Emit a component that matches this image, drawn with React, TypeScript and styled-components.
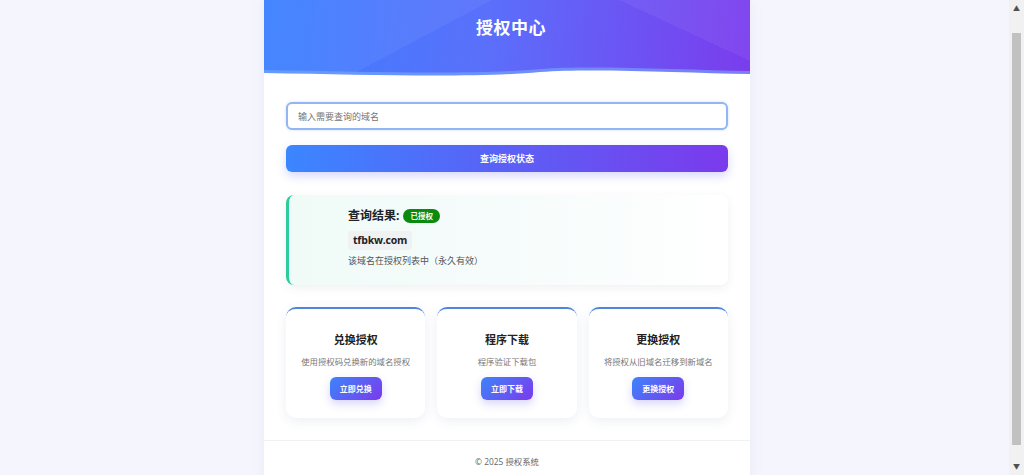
import styled, { createGlobalStyle } from "styled-components"

const GlobalStyle = createGlobalStyle`
	html, body {
		margin: 0;
		padding: 0;
		background: #f5f6fd;
	}
	body {
		font-family: "Open Sans", "Noto Sans CJK SC", sans-serif;
		color: #222;
	}
	* {
		box-sizing: border-box;
	}
`

const Wave = () => (
	<WaveSvg viewBox="0 0 486 14" preserveAspectRatio="none">
		<path
			d="M0,6 C110,8 210,11 276,5 C330,1 420,6 486,7 L486,14 L0,14 Z"
			fill="rgba(120,170,255,0.6)"
		/>
		<path
			d="M0,9 C110,11 210,14 276,8 C330,4 420,9 486,10 L486,14 L0,14 Z"
			fill="#ffffff"
		/>
	</WaveSvg>
)

// fake browser scrollbar, as seen in the screenshot
const Scrollbar = () => (
	<ScrollTrack>
		<ScrollArrow>▲</ScrollArrow>
		<ScrollThumb />
		<ScrollArrow>▼</ScrollArrow>
	</ScrollTrack>
)

const App = () => {
	const actions = [
		{ title: "兑换授权", desc: "使用授权码兑换新的域名授权", cta: "立即兑换" },
		{ title: "程序下载", desc: "程序验证下载包", cta: "立即下载" },
		{ title: "更换授权", desc: "将授权从旧域名迁移到新域名", cta: "更换授权" },
	]

	return (
		<>
			<GlobalStyle />
			<Page>
				<Container>
					<Header>
						<Title>授权中心</Title>
						<Wave />
					</Header>

					<Main>
						<SearchInput placeholder="输入需要查询的域名" />
						<SearchButton>查询授权状态</SearchButton>

						<ResultCard>
							<ResultHead>
								查询结果:
								<Badge>已授权</Badge>
							</ResultHead>
							<Domain>tfbkw.com</Domain>
							<ResultNote>该域名在授权列表中（永久有效）</ResultNote>
						</ResultCard>

						<CardGrid>
							{actions.map((action, index) => (
								<ActionCard key={index}>
									<CardTitle>{action.title}</CardTitle>
									<CardDesc>{action.desc}</CardDesc>
									<CardButton>{action.cta}</CardButton>
								</ActionCard>
							))}
						</CardGrid>
					</Main>

					<Footer>© 2025 授权系统</Footer>
				</Container>
			</Page>
			<Scrollbar />
		</>
	)
}

export default App

const Page = styled.div`
	min-height: 100vh;
	padding-right: 10px;
`

const Container = styled.div`
	width: 486px;
	margin: 0 auto;
	background: #ffffff;
	box-shadow: 0 0 14px rgba(80, 90, 160, 0.08);
	padding-bottom: 18px;
`

const Header = styled.header`
	position: relative;
	height: 78px;
	padding-top: 14px;
	padding-left: 8px;
	text-align: center;
	background:
		linear-gradient(152deg, rgba(255, 255, 255, 0.05) 36%, transparent 36%),
		linear-gradient(205deg, rgba(255, 255, 255, 0.05) 20%, transparent 20%),
		linear-gradient(95deg, #3a80ff 0%, #5a70fb 45%, #7b3ced 100%);
	overflow: hidden;
`

const Title = styled.h1`
	margin: 0;
	font-size: 17px;
	font-weight: 700;
	color: #ffffff;
	letter-spacing: 0.5px;
`

const WaveSvg = styled.svg`
	position: absolute;
	left: 0;
	bottom: 0;
	width: 100%;
	height: 14px;
	display: block;
`

const Main = styled.main`
	padding: 24px 22px 22px;
	display: flex;
	flex-direction: column;
`

const SearchInput = styled.input`
	height: 28px;
	width: 100%;
	padding: 0 10px;
	border: 2px solid #93b6f2;
	border-radius: 6px;
	font-family: inherit;
	font-size: 9px;
	outline: none;
	box-shadow: 0 0 3px rgba(59, 130, 246, 0.25);

	&::placeholder {
		color: #757575;
	}
`

const SearchButton = styled.button`
	margin-top: 15px;
	height: 27px;
	width: 100%;
	border: none;
	border-radius: 6px;
	background: linear-gradient(90deg, #3b86ff, #7b3aec);
	color: #ffffff;
	font-family: inherit;
	font-size: 9px;
	font-weight: 700;
	box-shadow: 0 4px 10px rgba(90, 100, 240, 0.25);
`

const ResultCard = styled.section`
	margin-top: 23px;
	height: 90px;
	padding: 12px 0 0 59px;
	border-left: 3px solid #2ccc9c;
	border-radius: 8px;
	background: linear-gradient(90deg, #f0fbf8 0%, #f6fcfb 50%, #ffffff 100%);
	box-shadow: 0 3px 10px rgba(60, 80, 120, 0.08);
	display: flex;
	flex-direction: column;
	align-items: flex-start;
`

const ResultHead = styled.h3`
	margin: 0;
	font-size: 12px;
	font-weight: 700;
	color: #222;
	display: flex;
	align-items: center;
	gap: 4px;
	line-height: 18px;
`

const Badge = styled.span`
	background: #0b8a10;
	color: #ffffff;
	font-size: 7.5px;
	font-weight: 700;
	padding: 2px 7px;
	border-radius: 8px;
	line-height: 10px;
`

const Domain = styled.div`
	margin-top: 6px;
	padding: 3px 5px;
	background: #eff1f3;
	border-radius: 4px;
	font-size: 10.5px;
	font-weight: 700;
	letter-spacing: -0.2px;
	color: #222;
	line-height: 13px;
`

const ResultNote = styled.p`
	margin: 5px 0 0;
	font-size: 9px;
	color: #555;
	line-height: 12px;
`

const CardGrid = styled.div`
	margin-top: 22px;
	display: grid;
	grid-template-columns: repeat(3, 1fr);
	gap: 12px;
`

const ActionCard = styled.article`
	height: 111px;
	padding-top: 24px;
	border-top: 2px solid #4f86dc;
	border-radius: 10px;
	background: #ffffff;
	box-shadow: 0 3px 12px rgba(60, 80, 130, 0.09);
	display: flex;
	flex-direction: column;
	align-items: center;
`

const CardTitle = styled.h4`
	margin: 0;
	font-size: 11px;
	font-weight: 700;
	color: #222;
	line-height: 14px;
`

const CardDesc = styled.p`
	margin: 9px 0 0;
	font-size: 8.4px;
	color: #777;
	line-height: 11px;
`

const CardButton = styled.button`
	margin-top: 10px;
	height: 23px;
	padding: 0 10px;
	border: none;
	border-radius: 6px;
	background: linear-gradient(135deg, #3d84fb, #7b3aec);
	color: #ffffff;
	font-family: inherit;
	font-size: 8px;
	font-weight: 700;
	box-shadow: 0 4px 8px rgba(100, 90, 240, 0.25);
`

const Footer = styled.footer`
	border-top: 1px solid #f0f1f5;
	padding: 14px 0 30px;
	text-align: center;
	font-size: 8.4px;
	color: #666;
`

const ScrollTrack = styled.div`
	position: fixed;
	top: 0;
	right: 0;
	width: 15px;
	height: 100vh;
	background: #f1f1f1;
	display: flex;
	flex-direction: column;
	align-items: center;
`

const ScrollArrow = styled.div`
	height: 17px;
	font-size: 7px;
	line-height: 17px;
	color: #505050;
`

const ScrollThumb = styled.div`
	margin-top: 16px;
	margin-bottom: 13px;
	width: 9px;
	flex: 1;
	background: #c1c1c1;
`
